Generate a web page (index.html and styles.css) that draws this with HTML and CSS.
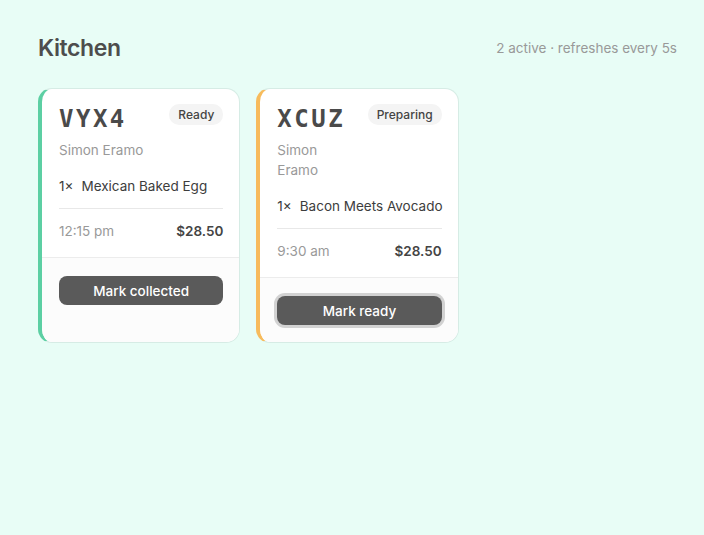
FILE: index.html
```html
<!DOCTYPE html>
<html lang="en">
<head>
    <meta charset="UTF-8">
    <meta name="viewport" content="width=device-width, initial-scale=1.0">
    <title>Kitchen</title>
    <link rel="stylesheet" href="styles.css">
</head>
<body>
    <div class="page">
        <div class="page-header">
            <h1 class="page-title">Kitchen</h1>
            <div class="page-meta">2 active · refreshes every 5s</div>
        </div>

        <div class="orders">
            <div class="order-card status-ready">
                <div class="order-body">
                    <div class="order-head">
                        <div class="order-who">
                            <div class="order-code">VYX4</div>
                            <div class="order-name">Simon Eramo</div>
                        </div>
                        <span class="badge">Ready</span>
                    </div>
                    <div class="order-items">
                        <div class="item"><span class="qty">1×</span><span>Mexican Baked Egg</span></div>
                    </div>
                    <div class="order-foot">
                        <span class="time">12:15 pm</span>
                        <span class="total">$28.50</span>
                    </div>
                </div>
                <div class="order-actions">
                    <button class="btn">Mark collected</button>
                </div>
            </div>

            <div class="order-card status-preparing">
                <div class="order-body">
                    <div class="order-head">
                        <div class="order-who">
                            <div class="order-code">XCUZ</div>
                            <div class="order-name">Simon Eramo</div>
                        </div>
                        <span class="badge">Preparing</span>
                    </div>
                    <div class="order-items">
                        <div class="item"><span class="qty">1×</span><span>Bacon Meets Avocado</span></div>
                    </div>
                    <div class="order-foot">
                        <span class="time">9:30 am</span>
                        <span class="total">$28.50</span>
                    </div>
                </div>
                <div class="order-actions">
                    <button class="btn btn-focus">Mark ready</button>
                </div>
            </div>
        </div>
    </div>
</body>
</html>
```

FILE: styles.css
```css
* {
    margin: 0;
    padding: 0;
    box-sizing: border-box;
}

body {
    font-family: Inter, 'Noto Sans', sans-serif;
    background: #e8fdf6;
    color: #444;
    min-height: 100vh;
}

.page {
    padding: 34px 27px 30px 38px;
}

.page-header {
    display: flex;
    align-items: center;
    justify-content: space-between;
    margin-bottom: 26px;
}

.page-title {
    font-size: 23px;
    font-weight: 600;
    color: #4d4d4d;
    letter-spacing: -0.4px;
    line-height: 28px;
}

.page-meta {
    font-size: 13.5px;
    color: #999;
}

.orders {
    display: grid;
    grid-template-columns: repeat(auto-fill, minmax(200px, 1fr));
    gap: 16px;
}

.order-card {
    background: white;
    border: 1px solid #d6ece5;
    border-left: 4px solid #5ccfa3;
    border-radius: 14px;
    overflow: hidden;
    display: flex;
    flex-direction: column;
}

.status-preparing {
    border-left-color: #f7bb5c;
}

.order-body {
    padding: 15px 16px 16px 17px;
}

.order-head {
    display: flex;
    justify-content: space-between;
    align-items: flex-start;
    gap: 12px;
}

.order-code {
    font-family: 'DejaVu Sans Mono', monospace;
    font-size: 24px;
    font-weight: bold;
    letter-spacing: 2.5px;
    color: #4a4a4a;
    line-height: 31px;
    margin-bottom: 5px;
}

.order-name {
    font-size: 13.5px;
    line-height: 20px;
    color: #999;
}

.badge {
    flex-shrink: 0;
    background: #f4f4f4;
    color: #444;
    font-size: 12px;
    font-weight: 500;
    padding: 3px 9px;
    border-radius: 10px;
    line-height: 15px;
}

.order-items {
    margin-top: 16px;
    padding-bottom: 12px;
    border-bottom: 1px solid #e8e8e8;
}

.item {
    display: flex;
    font-size: 13.5px;
    line-height: 20px;
    color: #3d3d3d;
    white-space: nowrap;
}

.qty {
    margin-right: 8px;
}

.order-foot {
    display: flex;
    justify-content: space-between;
    align-items: center;
    padding-top: 12px;
    font-size: 13.5px;
    line-height: 20px;
}

.time {
    color: #999;
}

.total {
    font-weight: 600;
    color: #444;
}

.order-actions {
    flex: 1;
    background: #fcfcfc;
    border-top: 1px solid #ececec;
    padding: 18px 16px 17px 17px;
}

.btn {
    display: block;
    width: 100%;
    height: 29px;
    background: #5a5a5a;
    color: white;
    border: none;
    border-radius: 8px;
    font-family: inherit;
    font-size: 13.5px;
    font-weight: 500;
    cursor: pointer;
}

.btn-focus {
    box-shadow: 0 0 0 3px #d2d2d2;
}
```
